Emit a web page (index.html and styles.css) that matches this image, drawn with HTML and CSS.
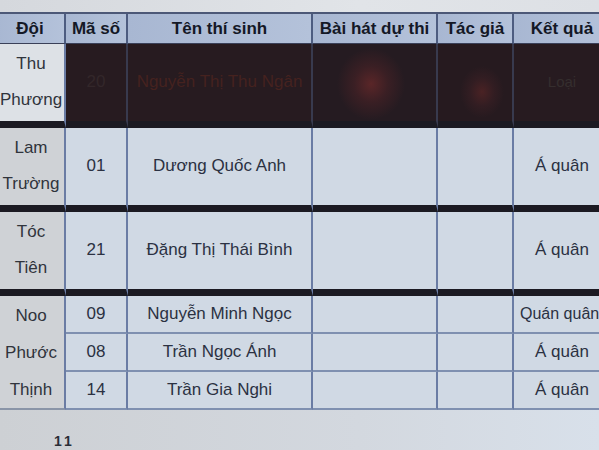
FILE: index.html
```html
<!DOCTYPE html>
<html lang="vi">
<head>
<meta charset="utf-8">
<title>Kết quả</title>
<link rel="stylesheet" href="styles.css">
</head>
<body>
<div class="screen">
  <div class="topstrip"></div>
  <div class="wrap">
    <table class="results">
      <colgroup>
        <col class="c-team"><col class="c-num"><col class="c-name"><col class="c-song"><col class="c-author"><col class="c-result">
      </colgroup>
      <thead>
        <tr>
          <th>Đội</th><th>Mã số</th><th>Tên thí sinh</th><th>Bài hát dự thi</th><th>Tác giả</th><th>Kết quả</th>
        </tr>
      </thead>
      <tbody>
        <tr class="sep out">
          <td class="team">Thu<br>Phương</td>
          <td class="dark num">20</td>
          <td class="dark name">Nguyễn Thị Thu Ngân</td>
          <td class="dark glow1"></td>
          <td class="dark glow2"></td>
          <td class="dark res">Loại</td>
        </tr>
        <tr class="sep">
          <td class="team">Lam<br>Trường</td>
          <td>01</td>
          <td>Dương Quốc Anh</td>
          <td></td><td></td>
          <td>Á quân</td>
        </tr>
        <tr class="sep">
          <td class="team">Tóc<br>Tiên</td>
          <td>21</td>
          <td>Đặng Thị Thái Bình</td>
          <td></td><td></td>
          <td>Á quân</td>
        </tr>
        <tr class="sub">
          <td class="team multi" rowspan="3">Noo<br>Phước<br>Thịnh</td>
          <td>09</td>
          <td>Nguyễn Minh Ngọc</td>
          <td></td><td></td>
          <td class="left">Quán quân</td>
        </tr>
        <tr class="sub">
          <td>08</td>
          <td>Trần Ngọc Ánh</td>
          <td></td><td></td>
          <td>Á quân</td>
        </tr>
        <tr class="sub">
          <td>14</td>
          <td>Trần Gia Nghi</td>
          <td></td><td></td>
          <td>Á quân</td>
        </tr>
      </tbody>
    </table>
  </div>
  <div class="below"><span class="next">11</span></div>
</div>
</body>
</html>
```
FILE: styles.css
```css
html, body {
  margin: 0;
  padding: 0;
  background: #cfd3d8;
}
.screen {
  width: 599px;
  height: 450px;
  overflow: hidden;
  font-family: "Liberation Sans", Arial, sans-serif;
  background: linear-gradient(90deg, #cdd0d4 0%, #d3d8df 60%, #d8e0ea 100%);
}
.topstrip {
  height: 12px;
  background: linear-gradient(90deg, #d5d8dd, #e1e4e8 60%, #dde0e5);
}
.wrap {
  margin-left: -4px;
  width: 640px;
}
.results {
  border-collapse: separate;
  border-spacing: 0;
  table-layout: fixed;
  width: 616px;
  font-size: 17px;
  color: #2b3142;
  border-top: 2px solid #4c5877;
}
.c-team { width: 70px; }
.c-num { width: 62px; }
.c-name { width: 185px; }
.c-song { width: 125px; }
.c-author { width: 76px; }
.c-result { width: 98px; }

th {
  background: linear-gradient(90deg, #a8b7d2, #b4c2da);
  color: #141826;
  font-weight: bold;
  font-size: 17px;
  line-height: 27px;
  padding: 1px 0 1px;
  border-right: 2px solid #4d5c80;
  border-bottom: 1px solid #3a4058;
  white-space: nowrap;
  overflow: hidden;
}
td {
  text-align: center;
  line-height: 36px;
  padding: 2px 0 3px;
  background: #d0d9e4;
  border-right: 2px solid #6a7ca4;
  white-space: nowrap;
  overflow: hidden;
}
td.team {
  background: #cfd2d6;
  color: #30343c;
  padding-left: 2px;
}
tr.out td.team { background: #dde1e6; }
td.dark {
  background: #271b20;
  border-right-color: #383a4e;
  color: #33272a;
}
td.name.dark { color: #45221f; }
td.glow1 {
  background: radial-gradient(ellipse 34px 36px at 58px 40px, #5a2628 0%, #3a1f24 50%, #251b21 100%);
}
td.glow2 {
  background: radial-gradient(ellipse 22px 26px at 44px 48px, #4a2224 0%, #321d22 55%, #261a1f 100%);
}
td.res.dark { color: #352e2e; font-size: 15px; }
tr.sep td { border-bottom: 7px solid #1b1a22; }
td.left { text-align: left; padding-left: 6px; font-size: 16px; }
tr.sub td {
  padding: 0;
  line-height: 36px;
  border-bottom: 2px solid #7f90b0;
}
tr.sub td.left { padding-left: 6px; }
tr.sub td.multi {
  line-height: 37px;
  padding: 0 0 0 2px;
  border-bottom: 2px solid #8a95a8;
}
.below {
  height: 60px;
}
.next {
  display: block;
  padding: 24px 0 0 54px;
  font-weight: bold;
  font-size: 14px;
  line-height: 14px;
  color: #2a2e38;
  letter-spacing: 3px;
}
```
